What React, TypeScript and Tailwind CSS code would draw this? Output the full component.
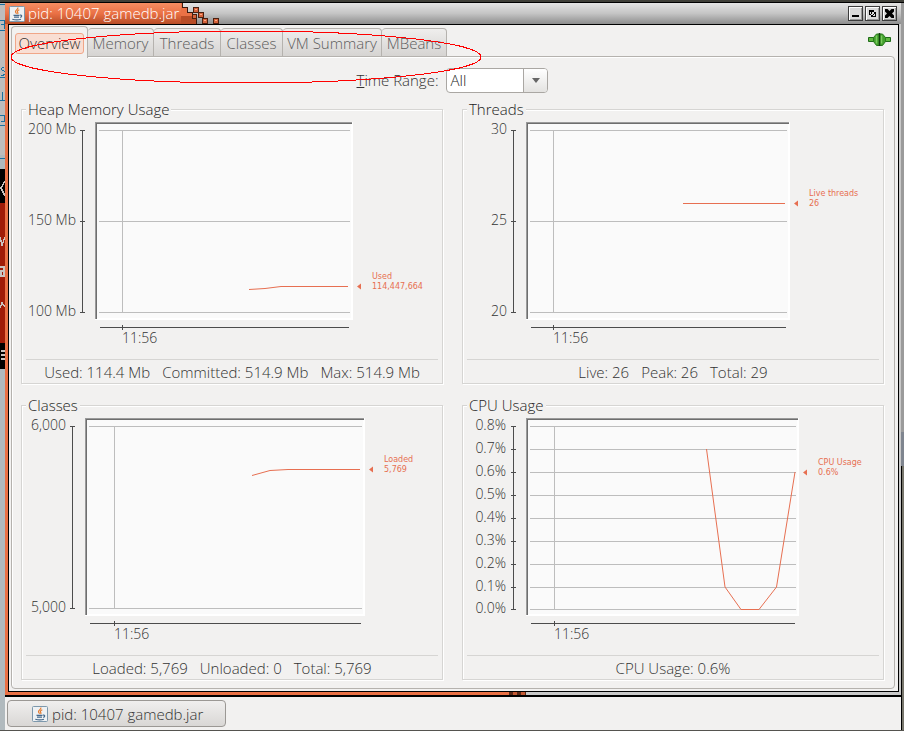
import React from "react";

type Series = {
  title: string;
  labelEnd: number;
  axis: number;
  right: number;
  timeX: number;
  ticks: [number, string][];
  points: string;
  markerY: number;
  name: string;
  value: string;
  stats: string[];
};

const charts: Series[] = [
  {
    title: "Heap Memory Usage",
    labelEnd: 54,
    axis: 60,
    right: 331,
    timeX: 100,
    ticks: [[10, "200 Mb"], [101, "150 Mb"], [192, "100 Mb"]],
    points: "227,169.5 243,168.5 259,166.5 326,166.5",
    markerY: 166,
    name: "Used",
    value: "114,447,664",
    stats: ["Used: 114.4 Mb", "Committed: 514.9 Mb", "Max: 514.9 Mb"],
  },
  {
    title: "Threads",
    labelEnd: 44,
    axis: 50,
    right: 327,
    timeX: 90,
    ticks: [[10, "30"], [101, "25"], [192, "20"]],
    points: "220,83.5 322,83.5",
    markerY: 83,
    name: "Live threads",
    value: "26",
    stats: ["Live: 26", "Peak: 26", "Total: 29"],
  },
  {
    title: "Classes",
    labelEnd: 44,
    axis: 50,
    right: 343,
    timeX: 92,
    ticks: [[10, "6,000"], [192, "5,000"]],
    points: "230,59.5 248,54.5 266,53.5 338,53.5",
    markerY: 53,
    name: "Loaded",
    value: "5,769",
    stats: ["Loaded: 5,769", "Unloaded: 0", "Total: 5,769"],
  },
  {
    title: "CPU Usage",
    labelEnd: 43,
    axis: 50,
    right: 336,
    timeX: 91,
    ticks: [
      [10, "0.8%"], [33, "0.7%"], [56, "0.6%"], [79, "0.5%"], [102, "0.4%"],
      [125, "0.3%"], [148, "0.2%"], [171, "0.1%"], [193, "0.0%"],
    ],
    points: "243.5,33 262,171 278,193.5 296,193.5 313.5,171 332,56",
    markerY: 56,
    name: "CPU Usage",
    value: "0.6%",
    stats: ["CPU Usage: 0.6%"],
  },
];

function Plot({ c }: { c: Series }) {
  const left = c.axis + 13;
  const top = c.ticks[0][0];
  const bottom = c.ticks[c.ticks.length - 1][0];
  const w = c.right - left;
  return (
    <svg viewBox="0 0 420 232" className="mt-px block h-auto w-full" role="img" aria-label={c.title}>
      <g shapeRendering="crispEdges">
        <rect x={left} y="2" width={w} height="198" fill="#fff" />
        <rect x={left + 2} y="4" width={w - 4} height="194" fill="#fafafa" />
        <rect x={left} y="2" width={w - 1} height="1" fill="#9a9a9a" />
        <rect x={left} y="2" width="1" height="197" fill="#9a9a9a" />
        <rect x={left + 1} y="3" width={w - 2} height="1" fill="#6e6e6e" />
        <rect x={left + 1} y="3" width="1" height="196" fill="#6e6e6e" />
        <rect x={c.axis} y={top} width="1" height={bottom - top + 1} fill="#4c4c4c" />
        {c.ticks.map(([y]) => (
          <g key={y}>
            <rect x={c.axis - 2} y={y} width="5" height="1" fill="#4c4c4c" />
            <rect x={left + 4} y={y} width={w - 7} height="1" fill="#bdbdbd" />
          </g>
        ))}
        <rect x={c.timeX} y={top} width="1" height={bottom - top} fill="#bdbdbd" />
        <rect x={left + 5} y="207" width={w - 9} height="1" fill="#4c4c4c" />
        <rect x={c.timeX} y="205" width="1" height="5" fill="#4c4c4c" />
      </g>
      {c.ticks.map(([y, label]) => (
        <text key={label} x={c.labelEnd} y={y + 4} textAnchor="end" fill="#333" className="text-[14px]">
          {label}
        </text>
      ))}
      <text x={c.timeX} y="223" fill="#333" className="text-[14px]">11:56</text>
      <polyline points={c.points} fill="none" stroke="#e76f51" strokeWidth="1" />
      <path d={`M${c.right + 4} ${c.markerY + 0.5}l4 -3v6z`} fill="#e76f51" />
      <g fill="#e76f51" className="font-['DejaVu_Sans',sans-serif] text-[8px] font-normal">
        <text x={c.right + 19} y={c.markerY - 7}>{c.name}</text>
        <text x={c.right + 19} y={c.markerY + 3}>{c.value}</text>
      </g>
    </svg>
  );
}

function Group({ c }: { c: Series }) {
  return (
    <fieldset className="min-w-0 border border-[#d6d5d3] shadow-[1px_1px_0_#fff,inset_1px_1px_0_#fff]">
      <legend className="ml-1 h-[19px] bg-[#f2f1f0] px-0.5 text-[15px] leading-[19px] text-[#222]">{c.title}</legend>
      <Plot c={c} />
      <div className="mx-1 mt-[7px] flex h-6 items-center justify-center gap-3 border-t border-[#d6d5d3] text-[15px] leading-5">
        {c.stats.map((s) => (
          <span key={s}>{s}</span>
        ))}
      </div>
    </fieldset>
  );
}

function JavaIcon() {
  return (
    <svg viewBox="0 0 16 16" className="size-4 shrink-0" aria-hidden="true">
      <rect x="0.5" y="0.5" width="15" height="15" rx="1" fill="#eef1f3" stroke="#7d98ac" />
      <path d="M8.8 1.5c.8 2-2.700 2.600-2.300 4.300.2.900 1 1.200 1 2M10.300 3.800c-2 .8-2.300 1.600-1.600 2.600.5.700.2 1.300-.2 1.600" fill="none" stroke="#e5792b" strokeWidth="1.200" />
      <path d="M4.500 9.300h6M5 11.200h5M3.300 13.200c2.500.8 6.500.8 8.700 0M11 9.200c2.200-.5 2.200 1.700.2 2.200" fill="none" stroke="#46698a" strokeWidth="1.200" />
    </svg>
  );
}

const tabs: [string, string][] = [
  ["Memory", "w-[66px]"],
  ["Threads", "w-[67px]"],
  ["Classes", "w-[62px]"],
  ["VM Summary", "w-[99px]"],
  ["MBeans", "w-[65px]"],
];

const winButton =
  "flex size-[15px] items-center justify-center border border-[#3c3c3c] bg-[#d9d9d9] shadow-[inset_1px_1px_0_#fff,inset_-1px_-1px_0_#999]";

function TitleBar() {
  return (
    <header className="flex h-[21px] items-center bg-linear-to-b from-[#e4e4e4] via-[#c4c4c4] to-[#8e8e8e] pr-1">
      <div className="flex h-full w-[176px] items-center gap-[3px] bg-linear-to-b from-[#f58d62] via-[#ea7145] to-[#b84c26] pl-1 text-[15px] leading-5 font-normal text-white">
        <JavaIcon />
        <h1 className="pb-0.5 font-light whitespace-nowrap">pid: 10407 gamedb.jar</h1>
      </div>
      <svg viewBox="0 0 40 21" className="h-[21px] w-10" shapeRendering="crispEdges" aria-hidden="true">
        <path d="M0 0h1v4h5v5h6v5h4v7H0z" fill="#ea7145" />
        <path d="M0 13h12v3h4v5H0z" fill="#b84c26" />
        <path d="M1.500 0v4.500h5v5h5v5h4v6.500" fill="none" stroke="#3a1a0e" />
        <g stroke="#4a2010" fill="#d5623a">
          <path d="M12.500 4.500h5v5h-5zM17.500 9.500h5v5h-5z" />
          <path d="M11.500 11.500h4v4h-4zM21.500 15.500h5v5h-5zM32.500 15.500h5v5h-5z" />
        </g>
        <path d="M14 6h2v1h-2zM19 11h2v1h-2zM23 17h2v1h-2zM34 17h2v1h-2z" fill="#ffab87" />
      </svg>
      <div className="ml-auto flex gap-0.5">
        <button aria-label="Minimize" className={winButton}>
          <svg viewBox="0 0 9 9" className="size-[9px]" shapeRendering="crispEdges"><path d="M1 6h7v2H1z" /></svg>
        </button>
        <button aria-label="Restore" className={winButton}>
          <svg viewBox="0 0 9 9" className="size-[9px]" shapeRendering="crispEdges">
            <path fillRule="evenodd" d="M1 1h5v5H1zM2 3v2h2V3zM3 3h5v5H3zM5 5v2h2V5z" />
          </svg>
        </button>
        <button aria-label="Close" className={winButton}>
          <svg viewBox="0 0 9 9" className="size-[9px]"><path d="M0 0h2.500l2 2 2-2H9v2.500l-2 2 2 2V9H6.500l-2-2-2 2H0V6.500l2-2-2-2z" /></svg>
        </button>
      </div>
    </header>
  );
}

function Plug() {
  return (
    <svg viewBox="0 0 24 14" className="mt-2 mr-[3px] ml-auto h-3.5 w-6" role="img" aria-label="Connected">
      <path d="M.5 4.500h5.500v4H.5zM17 4.500h5.500v4H17z" fill="#5fb93f" stroke="#1f6a18" />
      <path d="M5.500 4.500L8.500 1h6l3 3.500v4l-3 4h-6l-3-4z" fill="#43a02c" stroke="#2a7a1f" />
      <path d="M8.500 2.500v8M13.500 2.500v8" stroke="#7ccb5f" strokeWidth="1.500" />
      <path d="M11.500 0v13" stroke="#123f0e" strokeWidth="1.500" />
    </svg>
  );
}

function DesktopEdge() {
  return (
    <svg viewBox="0 0 5 370" className="h-[370px] w-[5px]" shapeRendering="crispEdges">
      <path d="M0 0h5v152H0z" fill="#bdbdbd" />
      <path d="M0 152h5v14H0z" fill="#aeb9be" />
      <path d="M0 166h5v34H0zM0 340h5v26H0z" fill="#000" />
      <path d="M0 200h5v140H0z" fill="#a01c08" />
      <g fill="none" stroke="#1a6f9f">
        <path d="M0 1.500h5M0 17.500h4v8M1 21.500h3M0 27.500h5M4 64c-3 0-3 4 0 4s2 5-3 4M0 74.500h5M2 89v8M0 97.500h5M0 112.500h4v6H1M0 122.500h5M0 155.500h5" />
      </g>
      <g fill="none" stroke="#c9c4c0" strokeWidth="1.500">
        <path d="M5 178l-4 7 4 8M0 234l2 8 3-8M0 264h4v9H1v-5h3M0 305l2-5 3 4M1 348h4M1 352h4M1 356h4" />
      </g>
    </svg>
  );
}

export default function App() {
  return (
    <div className="relative flex min-h-screen flex-col bg-[#3c3b37] font-['Open_Sans','Noto_Sans',sans-serif] font-light text-[#333]">
      <div className="h-[3px] border-b border-black bg-[#3f3f38]" />
      <div className="flex grow">
        <aside className="w-[5px] shrink-0 bg-[#b1babe]" aria-hidden="true">
          <DesktopEdge />
        </aside>
        <main className="flex min-w-0 grow flex-col bg-[#f2f1f0]">
          <TitleBar />
          <div className="flex bg-[#c9c9c9] pr-0.5">
            <div className="w-[3px] shrink-0 bg-[#ea7145]" />
            <div className="min-w-0 grow border border-black bg-[#f2f1f0] pr-[3px] pb-0.5 pl-0.5">
              <div className="relative z-10 flex h-8 items-start">
                <nav className="flex items-end pt-px" role="tablist">
                  <button role="tab" aria-selected="true" className="h-8 w-[77px] rounded-t border border-b-0 border-[#b5b2ae] bg-[#f2f1f0] p-[3px] pt-1 text-[15px] leading-5">
                    <span className="flex h-[21px] items-center justify-center rounded-[3px] border border-[#f0a688] bg-[#f9ded3] pb-px">Overview</span>
                  </button>
                  {tabs.map(([name, width]) => (
                    <button key={name} role="tab" aria-selected="false" className={`mb-px flex h-[29px] justify-center rounded-t border border-l-0 border-[#b5b2ae] bg-linear-to-b from-[#efeeed] to-[#d6d4d2] pt-1 text-[15px] leading-5 whitespace-nowrap text-[#5c5c5c] ${width}`}>
                      {name}
                    </button>
                  ))}
                </nav>
                <Plug />
              </div>
              <section className="-mt-px rounded-tr rounded-b border border-[#b5b2ae] pt-[11px] pr-2.5 pb-2 pl-[9px] shadow-[inset_1px_1px_0_#fff]">
                <div className="mb-[7px] flex h-[25px] items-center justify-center gap-2 text-[15px] leading-5">
                  <label htmlFor="range" className="pb-0.5"><span className="underline">T</span>ime Range:</label>
                  <div className="relative">
                    <select id="range" className="block h-[25px] w-[102px] appearance-none rounded border border-[#aaa7a3] bg-white pb-0.5 pl-[3px] text-[15px] leading-5 font-light text-[#222]">
                      <option>All</option>
                    </select>
                    <span className="pointer-events-none absolute inset-y-px right-px flex w-6 items-center justify-center rounded-r-[3px] border-l border-[#aaa7a3] bg-linear-to-b from-white to-[#e4e3e1]">
                      <svg viewBox="0 0 8 5" className="h-[5px] w-2"><path d="M0 0h8L4 5z" fill="#666" /></svg>
                    </span>
                  </div>
                </div>
                <div className="grid grid-cols-2 gap-x-[19px] gap-y-3">
                  {charts.map((c) => (
                    <Group key={c.title} c={c} />
                  ))}
                </div>
              </section>
            </div>
          </div>
          <div className="flex h-[5px] border-b-2 border-black bg-[#c9c9c9]">
            <div className="w-[504px] bg-[#ea7145]" />
            <div className="w-1 bg-[#5a2a18]" />
            <div className="w-1 bg-[#c45a34]" />
            <div className="w-1 bg-[#5a2a18]" />
            <div className="w-1 bg-[#c45a34]" />
            <div className="w-px bg-[#5a2a18]" />
          </div>
          <footer className="h-8 px-0.5 pt-[3px]">
            <button className="flex h-[27px] w-[219px] items-center gap-1 rounded border border-[#9b9894] bg-linear-to-b from-[#f0efee] to-[#d9d7d5] pl-6 text-[15px] leading-5 whitespace-nowrap">
              <JavaIcon />
              pid: 10407 gamedb.jar
            </button>
          </footer>
        </main>
        <aside className="flex w-[3px] shrink-0 flex-col bg-[#77766c]" aria-hidden="true">
          <div className="h-[429px] bg-[#9b9b9b]" />
          <div className="h-[34px] bg-[#7f858f]" />
          <div className="w-px grow bg-black" />
        </aside>
      </div>
      <div className="h-px bg-[#55544f]" />
      <svg viewBox="0 0 474 54" className="pointer-events-none absolute top-[30px] left-[9px] z-20 h-[54px] w-[474px]" aria-hidden="true">
        <ellipse cx="237" cy="27" rx="235" ry="26" fill="none" stroke="#f00" shapeRendering="crispEdges" />
      </svg>
    </div>
  );
}
